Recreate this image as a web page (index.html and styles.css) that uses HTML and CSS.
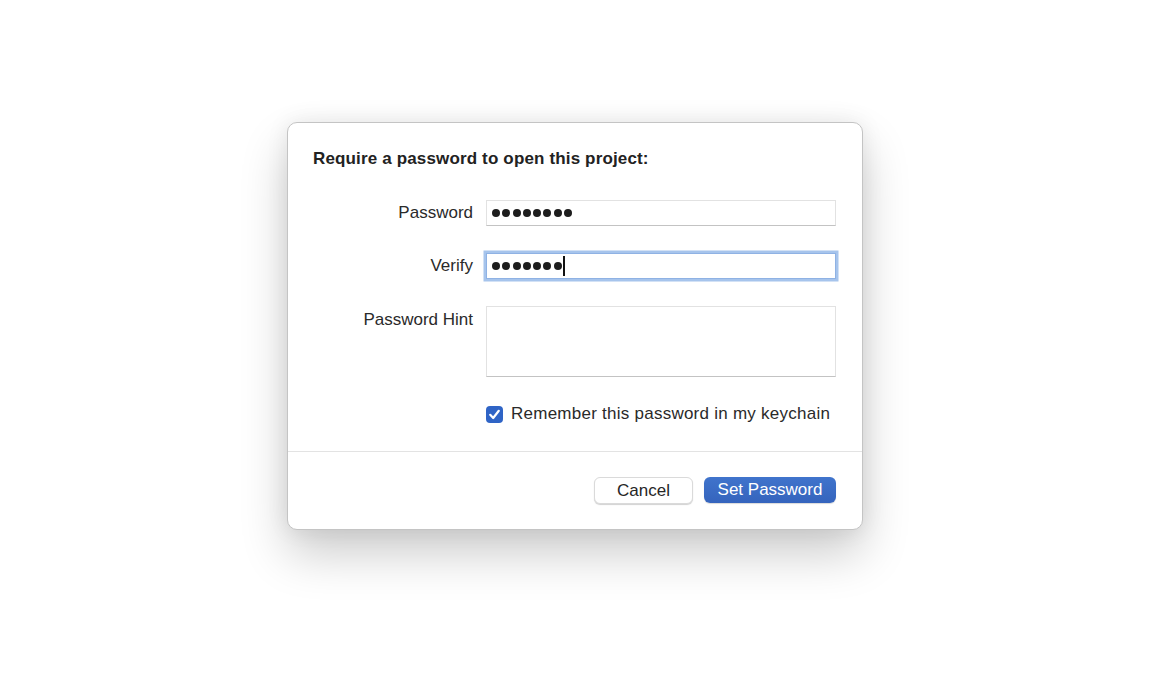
FILE: index.html
```html
<!DOCTYPE html>
<html lang="en">
  <head>
    <meta charset="UTF-8" />
    <meta name="viewport" content="width=device-width, initial-scale=1.0" />
    <link rel="stylesheet" href="styles.css">
  </head>
  <body>
    <div class="page">
      <div class="dialog">
        <div class="dialog-body">
          <h1 class="title">Require a password to open this project:</h1>

          <div class="form-grid">
            <label class="label">Password</label>
            <div class="field">
              <span class="dot"></span><span class="dot"></span><span class="dot"></span><span class="dot"></span><span class="dot"></span><span class="dot"></span><span class="dot"></span><span class="dot"></span>
            </div>

            <label class="label">Verify</label>
            <div class="field focused">
              <span class="dot"></span><span class="dot"></span><span class="dot"></span><span class="dot"></span><span class="dot"></span><span class="dot"></span><span class="dot"></span><span class="caret"></span>
            </div>

            <label class="label label-top">Password Hint</label>
            <div class="field hint"></div>

            <div></div>
            <label class="check-row">
              <span class="checkbox">
                <svg width="17" height="17" viewBox="0 0 17 17">
                  <path d="M4.2 8.8 L7.2 12 L12.8 4.8" fill="none" stroke="#fff" stroke-width="2.2" stroke-linecap="round" stroke-linejoin="round" />
                </svg>
              </span>
              Remember this password in my keychain
            </label>
          </div>
        </div>

        <div class="separator"></div>

        <div class="actions">
          <button class="btn cancel">Cancel</button>
          <button class="btn primary">Set Password</button>
        </div>
      </div>
    </div>
  </body>
</html>
```

FILE: styles.css
```css
* {
  box-sizing: border-box;
}

body {
  margin: 0;
  background: #fff;
  font-family: "Liberation Sans", Arial, sans-serif;
  color: #262626;
}

.page {
  display: flex;
  justify-content: center;
  padding-top: 122px;
  height: 698px;
}

.dialog {
  width: 576px;
  height: 408px;
  background: #fff;
  border: 1px solid #c4c4c4;
  border-radius: 10px;
  box-shadow: 0 24px 48px rgba(0, 0, 0, 0.2), 0 0 22px rgba(0, 0, 0, 0.08);
}

.dialog-body {
  padding: 26px 26px 27px 25px;
}

.title {
  margin: 0;
  font-size: 17px;
  line-height: 20px;
  font-weight: bold;
  letter-spacing: 0.15px;
  color: #222;
}

.form-grid {
  margin-top: 31px;
  display: grid;
  grid-template-columns: 160px 350px;
  column-gap: 13px;
  row-gap: 27px;
}

.label {
  font-size: 17px;
  line-height: 20px;
  text-align: right;
  align-self: center;
  color: #2a2a2a;
}

.label-top {
  align-self: start;
  padding-top: 4px;
}

.field {
  height: 26px;
  background: #fff;
  border: 1px solid #e2e2e2;
  border-bottom: 1px solid #c3c3c3;
  display: flex;
  align-items: center;
  padding-left: 5px;
}

.field.focused {
  border-color: #8fb2e4;
  box-shadow: 0 0 0 2.5px #a6c4ec;
}

.field.hint {
  height: 71px;
}

.dot {
  width: 8px;
  height: 8px;
  border-radius: 50%;
  background: #1d1d1d;
  margin-right: 2.3px;
}

.caret {
  width: 1.5px;
  height: 20px;
  background: #111;
  margin-left: -1px;
}

.check-row {
  display: flex;
  align-items: center;
  height: 20px;
  font-size: 17px;
  letter-spacing: 0.25px;
  color: #2a2a2a;
}

.checkbox {
  width: 17px;
  height: 17px;
  border-radius: 4px;
  background: #2f64c6;
  margin-right: 8px;
  display: flex;
}

.separator {
  height: 1px;
  background: #e3e3e3;
}

.actions {
  display: flex;
  justify-content: flex-end;
  gap: 11px;
  padding: 25px 26px 24px 0;
}

.btn {
  height: 27px;
  font-family: "Liberation Sans", Arial, sans-serif;
  font-size: 17px;
  border-radius: 6px;
  cursor: pointer;
  padding: 0;
}

.cancel {
  width: 99px;
  background: #fff;
  color: #262626;
  border: 1px solid #dadada;
  box-shadow: 0 1px 1px rgba(0, 0, 0, 0.18);
}

.primary {
  width: 132px;
  height: 26px;
  background: linear-gradient(#4074cc, #3564bd);
  color: #fff;
  border: none;
  box-shadow: 0 1px 1px rgba(0, 0, 0, 0.15);
}
```
